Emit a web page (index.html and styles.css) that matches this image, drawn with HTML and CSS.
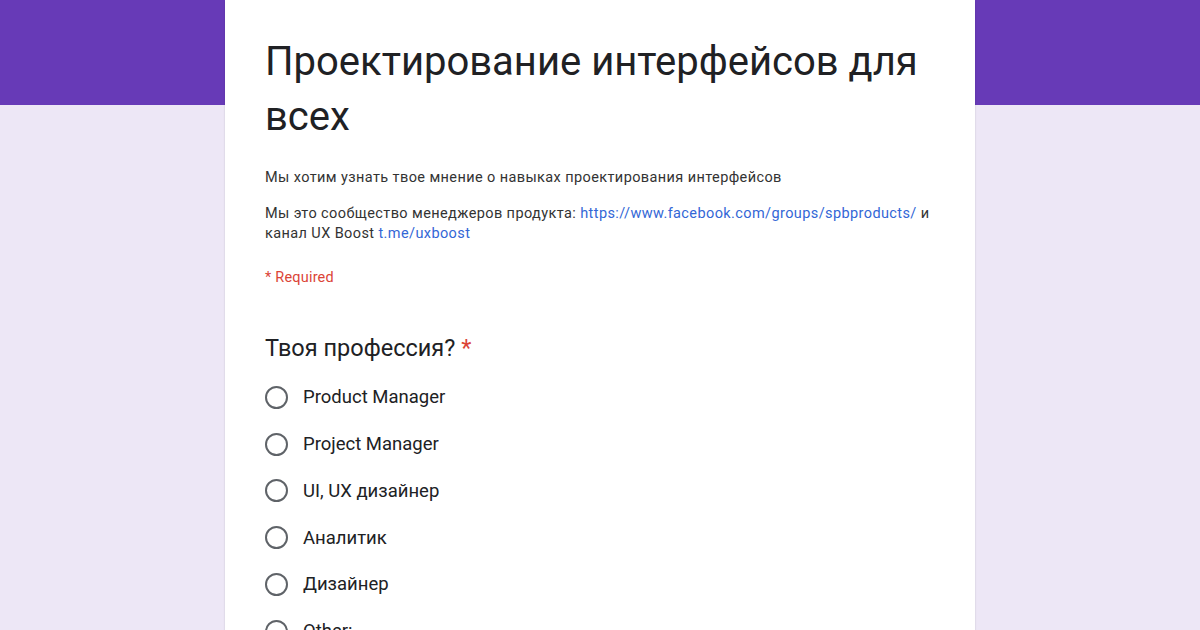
FILE: index.html
```html
<!DOCTYPE html>
<html lang="ru">
<head>
    <meta charset="UTF-8">
    <title>Проектирование интерфейсов для всех</title>
    <link rel="stylesheet" href="styles.css">
</head>
<body>
    <div class="header-band"></div>

    <div class="form-card">
        <h1 class="form-title">Проектирование интерфейсов для всех</h1>

        <div class="form-description">
            <p>Мы хотим узнать твое мнение о навыках проектирования интерфейсов</p>
            <p>Мы это сообщество менеджеров продукта: <a href="#">https://www.facebook.com/groups/spbproducts/</a> и канал UX Boost <a href="#">t.me/uxboost</a></p>
        </div>

        <div class="required-note">* Required</div>

        <div class="question">
            <div class="question-title">Твоя профессия? <span class="star">*</span></div>
            <ul class="options">
                <li class="option"><span class="radio"></span>Product Manager</li>
                <li class="option"><span class="radio"></span>Project Manager</li>
                <li class="option"><span class="radio"></span>UI, UX дизайнер</li>
                <li class="option"><span class="radio"></span>Аналитик</li>
                <li class="option"><span class="radio"></span>Дизайнер</li>
                <li class="option"><span class="radio"></span>Other:</li>
            </ul>
        </div>
    </div>
</body>
</html>
```

FILE: styles.css
```css
/* Reset */
* {
    margin: 0;
    padding: 0;
    box-sizing: border-box;
}

body {
    font-family: Roboto, "Noto Sans", sans-serif;
    background-color: #ede7f6;
    height: 630px;
    overflow: hidden;
    position: relative;
}

/* Purple strip behind the card */
.header-band {
    height: 105px;
    background-color: #673ab7;
}

/* Card */
.form-card {
    position: absolute; /* sits over the header band */
    top: 0;
    left: 225px;
    width: 750px;
    height: 700px;
    background-color: #ffffff;
    padding: 34px 40px 0 40px;
    box-shadow: 0 1px 2px rgba(0, 0, 0, 0.15);
}

.form-title {
    font-size: 40px;
    font-weight: 400;
    line-height: 55px;
    color: #202124;
    margin-bottom: 24px;
}

.form-description p {
    font-size: 14.5px;
    letter-spacing: 0.4px;
    line-height: 20px;
    color: #333333;
    margin-bottom: 16px;
}

.form-description a {
    color: #3367d6;
    text-decoration: none;
}

.required-note {
    font-size: 14.5px;
    letter-spacing: 0.2px;
    color: #db4437;
    margin-top: 25px;
}

/* Question */
.question {
    margin-top: 47px;
}

.question-title {
    font-size: 23.5px;
    color: #202124;
    line-height: 30px;
    margin-bottom: 11px;
}

.star {
    color: #db4437;
}

.options {
    list-style: none;
}

.option {
    display: flex;
    align-items: center;
    height: 46.75px;
    font-size: 18.5px;
    color: #202124;
}

.radio {
    width: 23px;
    height: 23px;
    border: 2px solid #5f6368;
    border-radius: 50%;
    margin-right: 15px;
    flex-shrink: 0;
}
```
